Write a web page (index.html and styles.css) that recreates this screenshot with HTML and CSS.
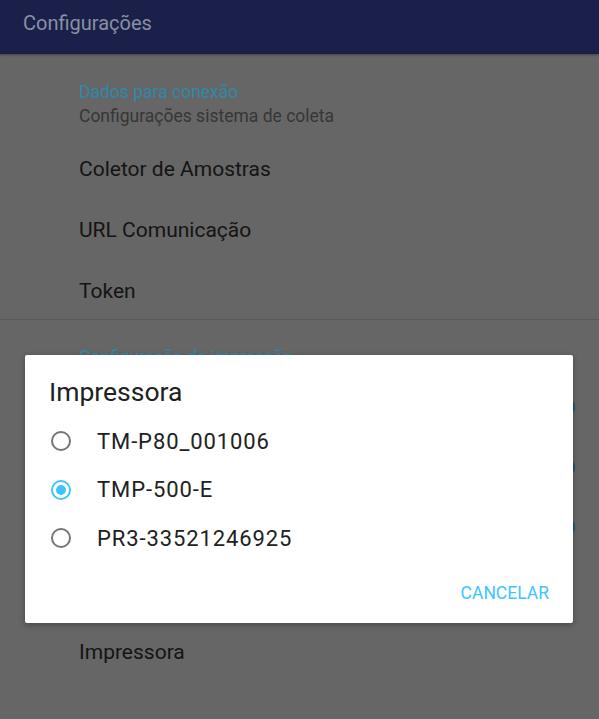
FILE: index.html
```html
<!DOCTYPE html>
<html lang="pt">
<head>
<meta charset="UTF-8">
<title>Configurações</title>
<link rel="stylesheet" href="styles.css">
</head>
<body>
<div class="app">
  <header class="toolbar">Configurações</header>

  <main class="prefs">
    <section class="group">
      <div class="category">Dados para conexão</div>
      <div class="summary">Configurações sistema de coleta</div>
      <div class="item">Coletor de Amostras</div>
      <div class="item">URL Comunicação</div>
      <div class="item">Token</div>
    </section>

    <div class="divider"></div>

    <section class="group">
      <div class="category category-spaced">Configuração de impressão</div>
      <div class="item item-switch"><span>Imprimir etiqueta</span><span class="switch"></span></div>
      <div class="item item-switch"><span>Imprimir comprovante</span><span class="switch"></span></div>
      <div class="item item-switch"><span>Imprimir automaticamente</span><span class="switch"></span></div>
      <div class="item item-tall">Modelo</div>
      <div class="item">Impressora</div>
    </section>
  </main>

  <div class="dialog">
    <div class="dialog-title">Impressora</div>
    <ul class="choices">
      <li class="choice"><span class="radio"></span>TM-P80_001006</li>
      <li class="choice"><span class="radio checked"></span>TMP-500-E</li>
      <li class="choice"><span class="radio"></span>PR3-33521246925</li>
    </ul>
    <div class="dialog-actions">
      <span class="action">CANCELAR</span>
    </div>
  </div>
</div>
</body>
</html>
```

FILE: styles.css
```css
html, body {
  margin: 0;
  height: 100%;
}
body {
  font-family: Roboto, "Liberation Sans", sans-serif;
  background: #666666;
}
.app {
  position: relative;
  height: 719px;
  overflow: hidden;
}
.toolbar {
  height: 54px;
  line-height: 47px;
  padding-left: 23px;
  font-size: 20px;
  color: #8c8fa3;
  background: #1a2049;
  box-shadow: 0 1px 2px rgba(0,0,0,0.35);
}
.prefs {
  display: flex;
  flex-direction: column;
}
.group {
  display: flex;
  flex-direction: column;
}
.category {
  margin-top: 26px;
  padding-left: 79px;
  font-size: 17.5px;
  line-height: 24px;
  color: #3088a8;
}
.category-spaced {
  margin-top: 25px;
  margin-bottom: 8px;
}
.summary {
  padding-left: 79px;
  font-size: 17.5px;
  line-height: 25px;
  color: #363636;
  margin-bottom: 7px;
}
.item {
  box-sizing: border-box;
  height: 61px;
  line-height: 55px;
  padding-top: 6px;
  padding-left: 79px;
  font-size: 21px;
  color: #141414;
}
.item-switch {
  display: flex;
  align-items: center;
  justify-content: space-between;
  height: 60px;
  padding-top: 0;
  padding-right: 24px;
}
.item-tall {
  height: 62px;
}
.switch {
  position: relative;
  width: 36px;
  height: 14px;
  border-radius: 7px;
  background: #234d5c;
}
.switch::after {
  content: "";
  position: absolute;
  right: 0;
  top: -3px;
  width: 20px;
  height: 20px;
  border-radius: 50%;
  background: #1b5b72;
}
.divider {
  height: 1px;
  background: #5a5a5a;
}

/* dialogo */
.dialog {
  position: absolute;
  left: 25px;
  top: 355px;
  width: 548px;
  height: 268px;
  background: #ffffff;
  border-radius: 2px;
  box-shadow: 0 2px 6px rgba(0,0,0,0.3);
  display: flex;
  flex-direction: column;
}
.dialog-title {
  padding: 22px 0 0 24px;
  font-size: 26.5px;
  line-height: 30px;
  color: #212121;
}
.choices {
  list-style: none;
  margin: 10px 0 0;
  padding: 0;
}
.choice {
  display: flex;
  align-items: center;
  height: 48.5px;
  padding-left: 26px;
  font-size: 22px;
  letter-spacing: 0.9px;
  color: #212121;
}
.radio {
  box-sizing: border-box;
  width: 20px;
  height: 20px;
  margin-right: 26px;
  border: 2px solid #757575;
  border-radius: 50%;
  display: flex;
  align-items: center;
  justify-content: center;
}
.radio.checked {
  border-color: #40c4ff;
}
.radio.checked::after {
  content: "";
  width: 10px;
  height: 10px;
  border-radius: 50%;
  background: #40c4ff;
}
.dialog-actions {
  display: flex;
  justify-content: flex-end;
  padding: 12px 24px 0 0;
}
.action {
  font-size: 17.5px;
  line-height: 36px;
  color: #40c4ff;
}
```
